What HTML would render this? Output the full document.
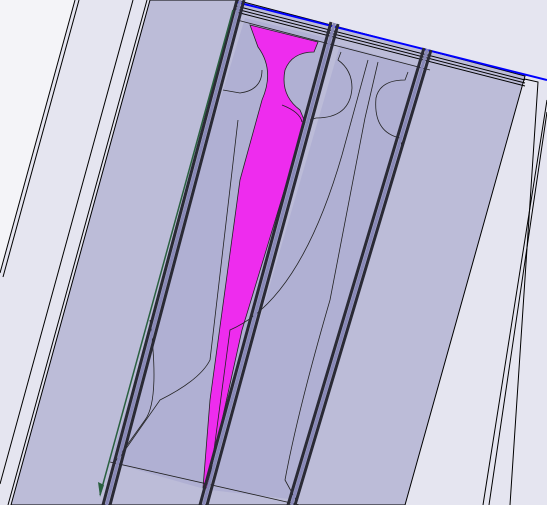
<!DOCTYPE html>
<html><head><style>html,body{margin:0;padding:0;background:#e5e5f0;}svg{display:block}</style></head>
<body>
<svg width="547" height="505" viewBox="0 0 547 505" xmlns="http://www.w3.org/2000/svg">
<rect width="547" height="505" fill="#e5e5f0"/>
<polygon points="0,0 75,0 0,273" fill="#f4f4f8"/>
<g stroke="#000" stroke-width="1" fill="none">
<line x1="75" y1="0" x2="0" y2="273"/>
<line x1="79" y1="0" x2="3" y2="277"/>
<line x1="133" y1="0" x2="0" y2="484"/>
<line x1="547" y1="100" x2="483" y2="505"/>
<line x1="547" y1="112" x2="489" y2="505"/>
<polyline points="520,78 538,82 510,505"/>
</g>
<polygon points="150,0 236,0 525,76 405,505 11,505" fill="#bcbcd8" stroke="#000" stroke-width="1"/>
<line x1="147" y1="0" x2="8" y2="505" stroke="#000"/>
<polygon points="245,18 335,40 208,490 110,462" fill="#b0b0d3"/>
<polygon points="340,45 425,68 298,500 210,490" fill="#b0b0d3"/>
<path d="M250,25 L318,42 L314,52 Q292,52 285,70 Q280,95 300,110 L305,122 L242,330 L207,488 L203,488 L210,400 L240,180 L262,100 Q275,70 258,47 Z" fill="#ee2cee" stroke="#222" stroke-width="0.8"/>
<g stroke="#222" stroke-width="0.8" fill="none">
<line x1="237" y1="20" x2="430" y2="70"/>
<line x1="110" y1="462" x2="300" y2="505"/>
<path d="M223,90 L240,93 Q262,90 262,70"/>
<path d="M282,105 Q300,112 302,122"/>
<path d="M341,52 L338,60 Q352,70 352,88 Q350,118 316,118 L310,120"/>
<path d="M368,60 L342,155"/>
<path d="M378,62 L365,118"/>
<path d="M408,72 L405,80 Q380,80 376,98 Q373,132 400,138 L402,146"/>
<path d="M238,120 L210,360 Q200,380 160,400 L118,460"/>
<path d="M342,155 Q300,300 230,330 L210,480"/>
<path d="M365,118 L330,300 Q298,410 285,480 L296,500"/>
<path d="M150,320 Q160,400 145,420 L115,462"/>
</g>
<g stroke="#000" stroke-width="1">
<line x1="236" y1="6" x2="525" y2="80"/>
<line x1="236" y1="9" x2="525" y2="83"/>
<line x1="236" y1="12" x2="525" y2="86"/>
</g>
<line x1="236" y1="2" x2="547" y2="80" stroke="#0000ff" stroke-width="2"/>
<g>
<line x1="237" y1="0" x2="103" y2="505" stroke="#2a2a35" stroke-width="3"/>
<line x1="244" y1="0" x2="110" y2="505" stroke="#2a2a35" stroke-width="3"/>
<line x1="240.5" y1="0" x2="106.5" y2="505" stroke="#8888b8" stroke-width="3"/>
<line x1="233" y1="10" x2="100" y2="495" stroke="#2a6040" stroke-width="1.5"/>
<line x1="331" y1="22" x2="200" y2="505" stroke="#2a2a35" stroke-width="3"/>
<line x1="338" y1="24" x2="207" y2="505" stroke="#2a2a35" stroke-width="3"/>
<line x1="334.5" y1="23" x2="203.5" y2="505" stroke="#8888b8" stroke-width="3"/>
<line x1="424" y1="48" x2="288" y2="505" stroke="#2a2a35" stroke-width="3"/>
<line x1="431" y1="50" x2="295" y2="505" stroke="#2a2a35" stroke-width="3"/>
<line x1="427.5" y1="49" x2="291.5" y2="505" stroke="#8888b8" stroke-width="3"/>
</g>
<polygon points="98,482 104,485 100,497" fill="#2a6040"/>
</svg>
</body></html>
